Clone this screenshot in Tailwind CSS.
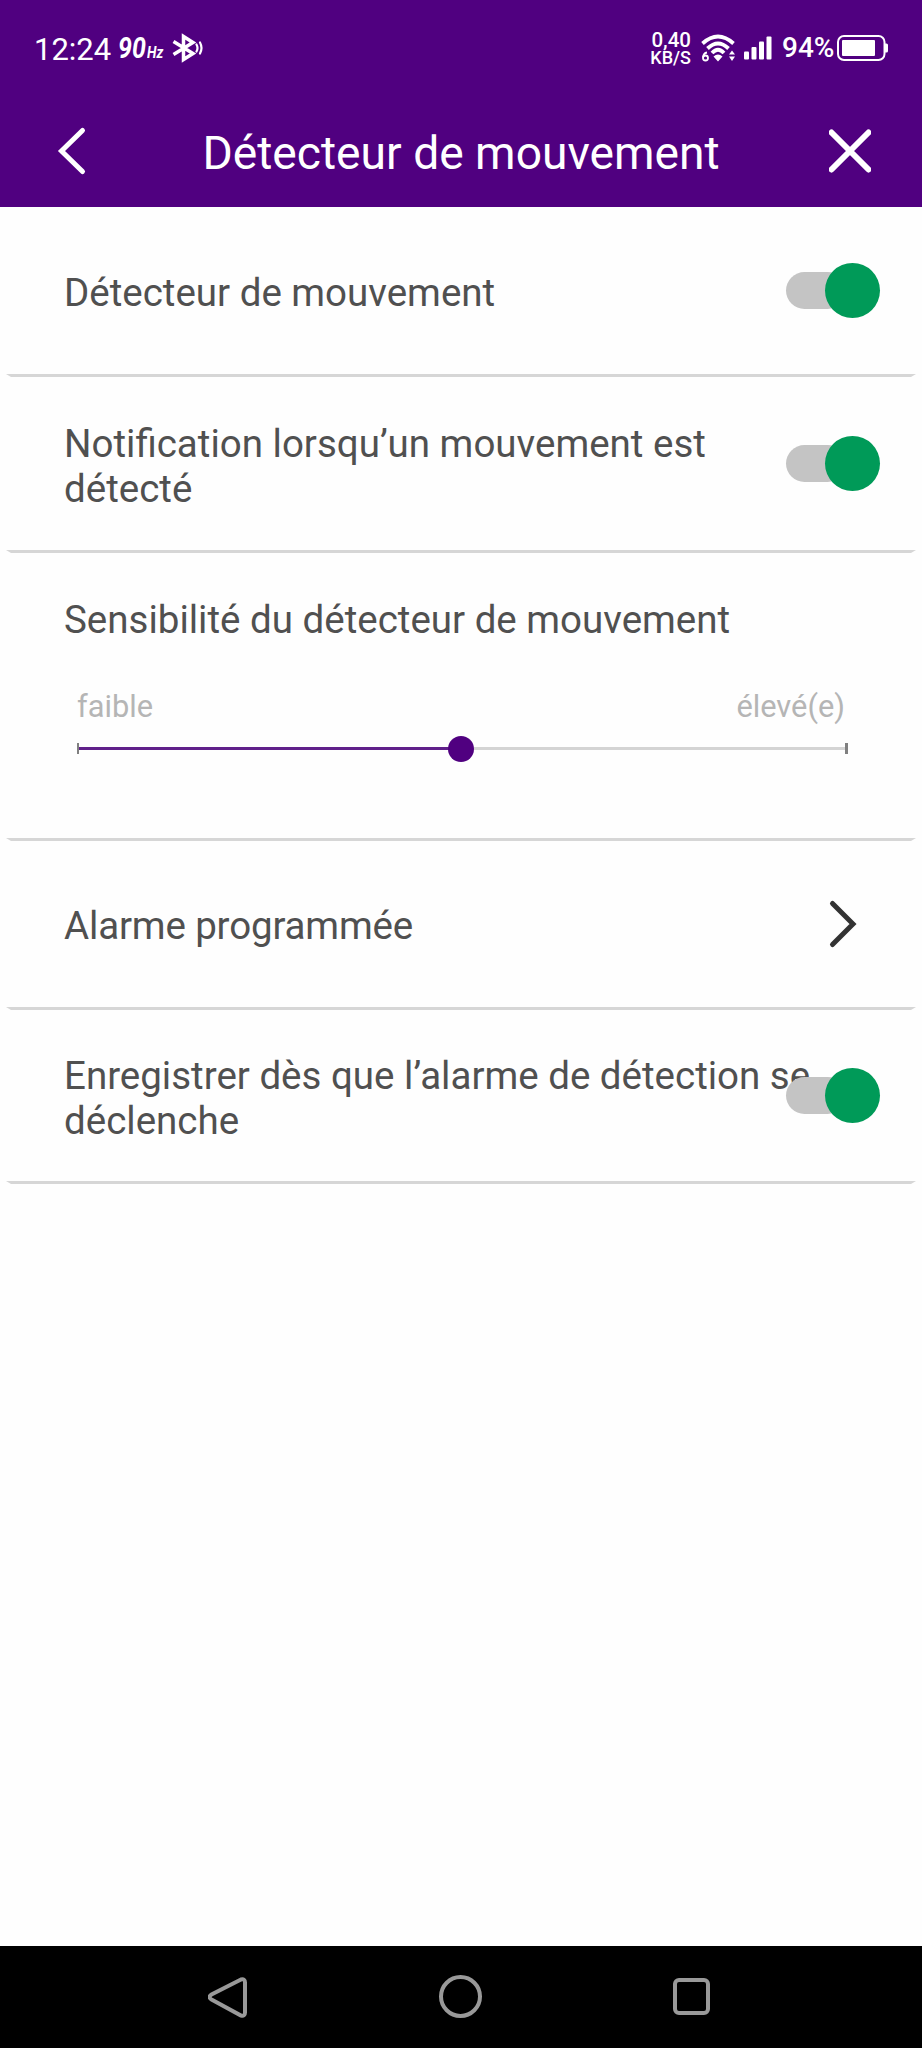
<!DOCTYPE html>
<html lang="fr">
<head>
    <meta charset="UTF-8">
    <meta name="viewport" content="width=device-width, initial-scale=1.0">
    <title>Détecteur de mouvement</title>
    <script src="https://cdn.jsdelivr.net/npm/@tailwindcss/browser@4"></script>
</head>
<body class="bg-[#fefefe]">
    <div class="flex flex-col w-[922px] h-[2048px] overflow-hidden font-[Roboto,sans-serif] text-[#505050]">
        <!-- Status bar -->
        <div class="flex items-center justify-between h-24 pl-[34px] pr-[34px] bg-[#500080] text-white whitespace-nowrap">
            <div class="flex items-center">
                <span class="w-[84px] text-[31px] leading-none pt-[3px]">12:24</span>
                <span class="flex items-baseline w-[54px] leading-none font-bold italic">
                    <span class="w-[29px] text-[29px] origin-left scale-x-[0.86]">90</span>
                    <span class="text-[16px] origin-left scale-x-[0.86]">Hz</span>
                </span>
                <svg class="w-[32px] h-[30px]" viewBox="0 0 32 30" fill="none" stroke="currentColor">
                    <path stroke-width="3.500" d="M1.500 8.500 21 20.500 11.500 26.500V3.500L21 9.500 1.500 21.500" />
                    <path stroke-width="2.200" stroke-linecap="round" d="M24.500 11.500q2 3.500 0 7M28 9.500q3 5.500 0 11" />
                </svg>
            </div>
            <div class="flex items-center">
                <div class="flex flex-col items-end w-[42px] mr-[10px] font-medium">
                    <span class="text-[20.5px] leading-[18px]">0,40</span>
                    <span class="text-[18px] leading-[17px]">KB/S</span>
                </div>
                <svg class="w-[34px] h-[28px] mr-[9px]" viewBox="0 0 34 28" fill="none" stroke="currentColor">
                    <path stroke-width="3.800" d="M1.500 9.500Q17 -4.500 32.500 9.500M6.500 14.500Q17 4.500 27.500 14.500M11 19Q17 12.500 23 19" />
                    <path fill="currentColor" stroke="none" d="M12.500 22.500Q17 18.500 21.500 22.500L17 27.500ZM28 20.500 31 16.500 34 20.500ZM28 22.500 31 27 34 22.500Z" />
                    <path stroke-width="1.800" d="M6 18.500Q2.500 19 2 23.500" />
                    <circle cx="4.500" cy="24" r="2.500" stroke-width="1.800" />
                </svg>
                <svg class="w-[28px] h-[24px] mr-[10px]" viewBox="0 0 28 24" fill="currentColor">
                    <rect x="0" y="15.500" width="5" height="8" rx="1" />
                    <rect x="7.500" y="11" width="5" height="12.500" rx="1" />
                    <rect x="15" y="5.500" width="5" height="18" rx="1" />
                    <rect x="22.500" y="0.500" width="5" height="23" rx="1" />
                </svg>
                <span class="w-[55px] text-[28px] leading-none font-medium">94%</span>
                <svg class="w-[51px] h-[26px]" viewBox="0 0 51 26">
                    <rect x="1" y="1" width="46.500" height="24" rx="6" fill="none" stroke="currentColor" stroke-width="2" />
                    <rect x="5" y="5" width="33" height="16" rx="1" fill="currentColor" />
                    <path d="M48 8.500h1.500q1.500 0 1.500 1.500v6q0 1.500-1.500 1.500H48z" fill="currentColor" />
                </svg>
            </div>
        </div>

        <!-- Header -->
        <header class="flex items-center justify-between h-[111px] pl-[57px] pr-[51px] pb-[2px] bg-[#500080] text-white">
            <svg class="w-[30px] h-[50px]" viewBox="0 0 30 50" fill="none" stroke="currentColor" stroke-width="5" stroke-linecap="round">
                <path d="M25.500 4.500 4.500 25 25.500 45.500" />
            </svg>
            <h1 class="text-[46.2px] leading-none pt-[5px] pl-[6px]">Détecteur de mouvement</h1>
            <svg class="w-[42px] h-[50px]" viewBox="0 0 42 50" fill="none" stroke="currentColor" stroke-width="6" stroke-linecap="round">
                <path d="M2.500 6.500 39.500 43.500M39.500 6.500 2.500 43.500" />
            </svg>
        </header>

        <!-- Settings list -->
        <main class="flex-1 text-[38.5px] leading-[45px]">
            <div class="flex items-center justify-between h-[167px] pl-16 pr-[42px]">
                <span class="pt-[3px]">Détecteur de mouvement</span>
                <div class="flex items-center w-[94px] h-[56px]">
                    <div class="w-[60px] h-[37px] rounded-full bg-[#c4c4c4]"></div>
                    <div class="size-[55px] shrink-0 -ml-[21px] rounded-full bg-[#009a58]"></div>
                </div>
            </div>
            <div class="h-[3px] mx-1.5 bg-[#d6d6d6] [clip-path:polygon(0_0,100%_0,calc(100%-5px)_100%,5px_100%)]"></div>

            <div class="flex items-center justify-between h-[173px] pl-16 pr-[42px]">
                <span class="w-[700px] pt-[4px]">Notification lorsqu’un mouvement est détecté</span>
                <div class="flex items-center w-[94px] h-[56px] mb-[1px]">
                    <div class="w-[60px] h-[37px] rounded-full bg-[#c4c4c4]"></div>
                    <div class="size-[55px] shrink-0 -ml-[21px] rounded-full bg-[#009a58]"></div>
                </div>
            </div>
            <div class="h-[3px] mx-1.5 bg-[#d6d6d6] [clip-path:polygon(0_0,100%_0,calc(100%-5px)_100%,5px_100%)]"></div>

            <div class="h-[285px] pt-[44px]">
                <p class="pl-16">Sensibilité du détecteur de mouvement</p>
                <div class="flex justify-between mt-[47px] pl-[77px] pr-[77px] text-[30.8px] leading-9 text-[#b5b5b5]">
                    <span>faible</span>
                    <span>élevé(e)</span>
                </div>
                <!-- Sensitivity slider -->
                <div class="flex items-center h-[27px] mt-[10px] pl-[77px] pr-[74px]">
                    <div class="w-[2px] h-[11px] bg-[#808080]"></div>
                    <div class="w-[371px] h-[3px] bg-[#60208a]"></div>
                    <div class="relative size-[26px] -mx-[2px] rounded-full bg-[#500080]"></div>
                    <div class="flex-1 h-[3px] bg-[#d4d4d4]"></div>
                    <div class="w-[3px] h-[11px] bg-[#808080]"></div>
                </div>
            </div>
            <div class="h-[3px] mx-1.5 bg-[#d6d6d6] [clip-path:polygon(0_0,100%_0,calc(100%-5px)_100%,5px_100%)]"></div>

            <div class="flex items-center justify-between h-[166px] pl-16 pr-[64px]">
                <span class="pt-[3px] tracking-[-0.15px]">Alarme programmée</span>
                <svg class="w-[30px] h-[50px]" viewBox="0 0 30 50" fill="none" stroke="#333" stroke-width="5" stroke-linecap="round">
                    <path d="M4.500 4.500 25 25 4.500 45.500" />
                </svg>
            </div>
            <div class="h-[3px] mx-1.5 bg-[#d6d6d6] [clip-path:polygon(0_0,100%_0,calc(100%-5px)_100%,5px_100%)]"></div>

            <!-- The label runs under the switch here -->
            <div class="flex items-center h-[171px] pl-16 pr-[42px]">
                <span class="w-[760px] shrink-0 pt-[5px]">Enregistrer dès que l’alarme de détection se déclenche</span>
                <div class="relative flex items-center shrink-0 w-[94px] h-[56px] -ml-[38px]">
                    <div class="w-[60px] h-[37px] rounded-full bg-[#c4c4c4]"></div>
                    <div class="size-[55px] shrink-0 -ml-[21px] rounded-full bg-[#009a58]"></div>
                </div>
            </div>
            <div class="h-[3px] mx-1.5 bg-[#d6d6d6] [clip-path:polygon(0_0,100%_0,calc(100%-5px)_100%,5px_100%)]"></div>
        </main>

        <!-- Android navigation -->
        <nav class="flex items-center justify-center h-[102px] pr-[2px] pb-[1px] bg-black text-[#999]">
            <div class="flex justify-center w-[231px]">
                <svg class="w-[42px] h-[44px]" viewBox="0 0 42 44" fill="none" stroke="currentColor" stroke-width="4">
                    <path d="M33 4.500 3.500 19.500Q-0.500 22 3.500 24.500L33 40.500Q37 41.500 37 37.500V7.500Q37 3.500 33 4.500Z" />
                </svg>
            </div>
            <div class="flex justify-center w-[231px]">
                <div class="size-[43px] rounded-full border-4 border-[#999]"></div>
            </div>
            <div class="flex justify-center w-[231px]">
                <div class="size-[37px] rounded-[6px] border-4 border-[#999]"></div>
            </div>
        </nav>
    </div>
</body>
</html>
